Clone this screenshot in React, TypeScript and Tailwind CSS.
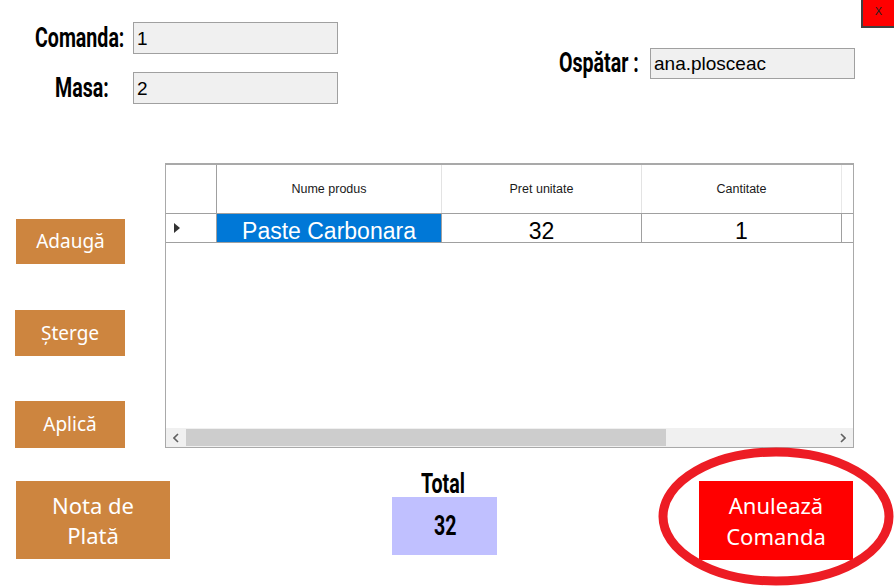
import React from 'react';

const Cond: React.FC<{ children: React.ReactNode; className?: string }> = ({ children, className = '' }) => (
  <span
    className={`inline-block origin-left scale-x-[0.7] whitespace-nowrap font-['Roboto'] font-bold text-[28px] leading-none text-black ${className}`}
  >
    {children}
  </span>
);

const TextBox: React.FC<{ value: string; className?: string }> = ({ value, className = '' }) => (
  <div
    className={`flex items-center border border-[#a0a0a0] bg-[#f0f0f0] pl-[3px] pt-[2px] font-['Liberation_Sans'] text-[19px] text-black ${className}`}
  >
    {value}
  </div>
);

const OrangeBtn: React.FC<{ children: React.ReactNode; className?: string }> = ({ children, className = '' }) => (
  <button
    className={`flex items-center justify-center bg-[#cd853f] font-['Noto_Sans'] text-white ${className}`}
  >
    {children}
  </button>
);

const App: React.FC = () => {
  return (
    <div className="relative h-[586px] w-[894px] overflow-hidden bg-white">
      {/* top: order info */}
      <div className="flex h-[163px]">
        <div className="pt-[22px]">
          <div className="flex items-center">
            <div className="w-[133px] shrink-0 pl-[35px]">
              <Cond>Comanda:</Cond>
            </div>
            <TextBox value="1" className="h-[32px] w-[205px]" />
          </div>
          <div className="mt-[18px] flex items-center">
            <div className="w-[133px] shrink-0 pl-[55px]">
              <Cond>Masa:</Cond>
            </div>
            <TextBox value="2" className="h-[32px] w-[205px]" />
          </div>
        </div>

        <div className="ml-auto flex">
          <div className="mt-[48px] flex h-[31px] items-center">
            <div className="w-[91px] shrink-0">
              <Cond>Ospătar :</Cond>
            </div>
            <TextBox value="ana.plosceac" className="h-[31px] w-[205px]" />
          </div>
          <button className="ml-[6px] flex h-[28px] w-[33px] items-start justify-center border-b-2 border-l-2 border-[#404040] bg-[#ff0000] pt-[3px] font-['Liberation_Sans'] text-[11px] text-[#202020]">
            X
          </button>
        </div>
      </div>

      {/* middle: actions + grid */}
      <div className="flex h-[285px]">
        <div className="flex w-[165px] shrink-0 flex-col pl-[15px]">
          <OrangeBtn className="ml-[1px] mt-[56px] h-[45px] w-[109px] text-[19px]">Adaugă</OrangeBtn>
          <OrangeBtn className="mt-[46px] h-[46px] w-[110px] text-[19px]">Ștergе</OrangeBtn>
          <OrangeBtn className="mt-[45px] h-[47px] w-[110px] text-[19px]">Aplică</OrangeBtn>
        </div>

        <div className="flex h-[285px] w-[689px] flex-col border border-t-2 border-[#a9a9a9] bg-white font-['Liberation_Sans']">
          <div className="flex h-[49px] border-b border-[#a0a0a0] text-[12.5px] text-[#1a1a1a]">
            <div className="w-[51px] border-r border-[#a0a0a0]" />
            <div className="flex w-[225px] items-center justify-center border-r border-[#e3e3e3]">Nume produs</div>
            <div className="flex w-[200px] items-center justify-center border-r border-[#e3e3e3]">Pret unitate</div>
            <div className="flex w-[200px] items-center justify-center border-r border-[#e8e8e8]">Cantitate</div>
            <div className="flex-1" />
          </div>
          <div className="flex h-[29px] border-b border-[#a0a0a0] text-[23px] leading-[22px]">
            <div className="flex w-[51px] items-center border-r border-[#a0a0a0] pl-[8px]">
              <svg width="6" height="10" viewBox="0 0 6 10">
                <path d="M0 0 L6 5 L0 10 Z" fill="#333" />
              </svg>
            </div>
            <div className="w-[225px] border-r border-[#a0a0a0] bg-[#0078d7] pt-[6px] text-center text-white">
              Paste Carbonara
            </div>
            <div className="w-[200px] border-r border-[#a0a0a0] pt-[6px] text-center text-black">32</div>
            <div className="w-[200px] border-r border-[#a0a0a0] pt-[6px] text-center text-black">1</div>
            <div className="flex-1" />
          </div>
          <div className="flex-1" />
          <div className="flex h-[19px] items-center bg-[#f0f0f0]">
            <div className="flex w-[20px] justify-center">
              <svg width="6" height="10" viewBox="0 0 6 10">
                <path d="M5 1 L1 5 L5 9" stroke="#606060" strokeWidth="1.6" fill="none" />
              </svg>
            </div>
            <div className="h-[17px] w-[480px] bg-[#cdcdcd]" />
            <div className="flex-1" />
            <div className="flex w-[20px] justify-center">
              <svg width="6" height="10" viewBox="0 0 6 10">
                <path d="M1 1 L5 5 L1 9" stroke="#606060" strokeWidth="1.6" fill="none" />
              </svg>
            </div>
          </div>
        </div>
      </div>

      {/* bottom: bill, total, cancel */}
      <div className="flex">
        <OrangeBtn className="ml-[16px] mt-[33px] h-[78px] w-[154px] flex-col text-[22px] leading-[30px]">
          <span>Nota de</span>
          <span>Plată</span>
        </OrangeBtn>

        <div className="ml-[222px] mt-[22px] flex w-[105px] flex-col">
          <div className="flex h-[27px] justify-center pl-[16px]">
            <Cond className="text-[27px]">Total</Cond>
          </div>
          <div className="flex h-[58px] items-center justify-center bg-[#c0c0ff] pl-[12px]">
            <Cond className="text-[27px]">32</Cond>
          </div>
        </div>

        <div className="relative ml-[202px] mt-[33px]">
          <button className="flex h-[79px] w-[154px] flex-col items-center justify-center bg-[#ff0000] font-['Noto_Sans'] text-[22px] leading-[31px] text-white">
            <span>Anulează</span>
            <span>Comanda</span>
          </button>
          <svg
            className="pointer-events-none absolute left-[-41px] top-[-34px]"
            width="236"
            height="139"
            viewBox="0 0 236 139"
          >
            <ellipse cx="118" cy="69.5" rx="113" ry="64.5" fill="none" stroke="#ed1c24" strokeWidth="9" />
          </svg>
        </div>
      </div>
    </div>
  );
};

export default App;
